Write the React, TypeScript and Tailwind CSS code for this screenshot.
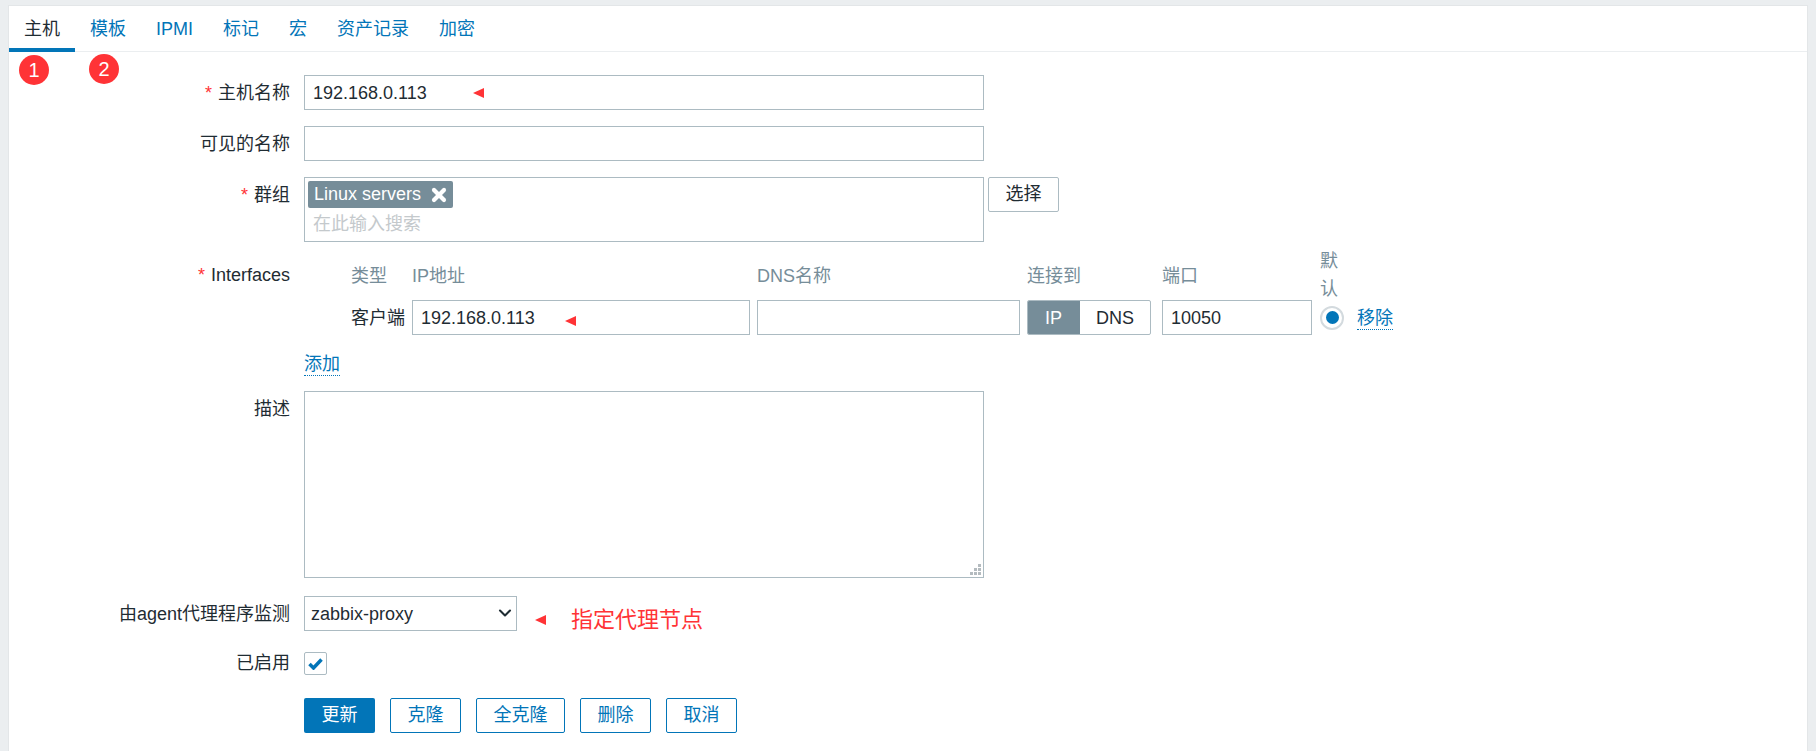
import { ChevronDown, X } from "lucide-react";

const tabs = ["主机", "模板", "IPMI", "标记", "宏", "资产记录", "加密"];
const buttons = ["克隆", "全克隆", "删除", "取消"];

function Arrow({ className }: { className: string }) {
  return (
    <svg width="11" height="10" viewBox="0 0 11 10" className={className}>
      <path d="M0 5 L11 0 L11 10 Z" fill="#ff3336" />
    </svg>
  );
}

function Badge({ n, className }: { n: string; className: string }) {
  return (
    <span
      className={
        "absolute flex h-[30px] w-[30px] items-center justify-center rounded-full bg-[#ff3336] text-[20px] text-white " +
        className
      }
    >
      {n}
    </span>
  );
}

function Row({
  label,
  required,
  className,
  labelClass = "h-[35px] leading-[37px]",
  children,
}: {
  label: string;
  required?: boolean;
  className?: string;
  labelClass?: string;
  children: React.ReactNode;
}) {
  return (
    <div className={"flex " + (className ?? "")}>
      <div className={"w-[295px] shrink-0 pr-[14px] text-right " + labelClass}>
        {required && <span className="mr-[6px] text-[#ff3336]">*</span>}
        {label}
      </div>
      {children}
    </div>
  );
}

const inputClass = "h-[35px] border border-[#acbbc2] bg-white px-[8px] leading-[35px]";
const headClass = "text-[#768d99] leading-[26px] pb-[14px]";

export default function App() {
  return (
    <div
      className="min-h-[751px] bg-[#ebeef0] px-[8px] pt-[5px] text-[18px] text-[#1f2c33]"
      style={{ fontFamily: '"Liberation Sans", "Noto Sans CJK SC", sans-serif' }}
    >
      <div className="relative h-[746px] border-x border-t border-[#e3e6e8] bg-white">
        <div className="flex h-[46px] border-b border-[#ebeef0]">
          {tabs.map((t, i) => (
            <div
              key={t}
              className={
                "px-[15px] pt-[11px] leading-[24px] " +
                (i === 0 ? "h-[46px] border-b-[4px] border-[#0275b8]" : "text-[#0275b8]")
              }
            >
              {t}
            </div>
          ))}
        </div>

        <Badge n="1" className="left-[10px] top-[49px]" />
        <Badge n="2" className="left-[80px] top-[48px]" />

        <div className="pt-[23px]">
          <Row label="主机名称" required>
            <div className={inputClass + " relative w-[680px]"}>
              192.168.0.113
              <Arrow className="absolute left-[168px] top-[12px]" />
            </div>
          </Row>

          <Row label="可见的名称" className="mt-[16px]">
            <div className={inputClass + " w-[680px]"} />
          </Row>

          <Row label="群组" required className="mt-[16px]">
            <div className="h-[65px] w-[680px] border border-[#acbbc2] px-[3px] pt-[3px]">
              <span className="flex h-[27px] w-[145px] items-center justify-between rounded-[2px] bg-[#768d99] pl-[6px] pr-[4px] text-white">
                Linux servers
                <X size={20} strokeWidth={5} />
              </span>
              <div className="pl-[5px] leading-[33px] text-[#c4c9cc]">在此输入搜索</div>
            </div>
            <div className="ml-[4px] flex h-[35px] w-[71px] items-center justify-center rounded-[2px] border border-[#acbbc2]">
              选择
            </div>
          </Row>

          <Row label="Interfaces" required className="mt-[5px]" labelClass="pt-[11px] leading-[35px]">
            <div>
              <div className="grid h-[53px] grid-cols-[108px_345px_270px_135px_158px_37px] items-end">
                <div className={headClass + " pl-[47px]"}>类型</div>
                <div className={headClass}>IP地址</div>
                <div className={headClass}>DNS名称</div>
                <div className={headClass}>连接到</div>
                <div className={headClass}>端口</div>
                <div className="w-[20px] self-start leading-[28px] text-[#768d99]">默认</div>
              </div>
              <div className="grid grid-cols-[108px_345px_270px_135px_158px_37px_auto] items-center">
                <div className="h-[35px] pl-[47px] leading-[37px]">客户端</div>
                <div className={inputClass + " relative w-[338px]"}>
                  192.168.0.113
                  <Arrow className="absolute left-[152px] top-[15px]" />
                </div>
                <div className={inputClass + " w-[263px]"} />
                <div className="flex h-[35px] w-[124px] overflow-hidden rounded-[2px] border border-[#acbbc2]">
                  <div className="-my-px -ml-px flex w-[53px] items-center justify-center bg-[#768d99] pt-[1px] text-white">IP</div>
                  <div className="flex flex-1 items-center justify-center pt-[1px]">DNS</div>
                </div>
                <div className={inputClass + " w-[150px]"}>10050</div>
                <div className="flex h-[24px] w-[24px] items-center justify-center rounded-full border-2 border-[#d3dade]">
                  <span className="h-[13px] w-[13px] rounded-full bg-[#0275b8]" />
                </div>
                <span className="mt-[2px] border-b border-dotted border-[#0275b8] leading-[22px] text-[#0275b8]">移除</span>
              </div>
            </div>
          </Row>

          <Row label="" className="mt-[18px]" labelClass="">
            <span className="border-b border-dotted border-[#0275b8] leading-[22px] text-[#0275b8]">添加</span>
          </Row>

          <Row label="描述" className="mt-[15px]">
            <div className="relative h-[187px] w-[680px] border border-[#acbbc2]">
              <svg width="11" height="11" viewBox="0 0 11 11" className="absolute bottom-[2px] right-[2px]">
                <g fill="#b4bbbf">
                  <rect x="8" y="0" width="3" height="3" />
                  <rect x="4" y="4" width="3" height="3" />
                  <rect x="8" y="4" width="3" height="3" />
                  <rect x="0" y="8" width="3" height="3" />
                  <rect x="4" y="8" width="3" height="3" />
                  <rect x="8" y="8" width="3" height="3" />
                </g>
              </svg>
            </div>
          </Row>

          <Row label="由agent代理程序监测" className="mt-[18px] h-[35px]">
            <div className={inputClass + " relative w-[213px] pl-[6px]"}>
              zabbix-proxy
              <ChevronDown size={20} strokeWidth={2.5} className="absolute right-[1px] top-[6px] text-[#1f2c33]" />
            </div>
            <Arrow className="ml-[18px] mt-[19px]" />
            <span className="ml-[25px] text-[22px] leading-[48px] text-[#ff3336]">指定代理节点</span>
          </Row>

          <Row label="已启用" className="mt-[21px]" labelClass="leading-[23px]">
            <div className="flex h-[23px] w-[23px] items-center justify-center rounded-[2px] border border-[#acbbc2]">
              <svg width="15" height="12" viewBox="0 0 15 12">
                <path d="M1.5 6 L5.5 10 L13.5 1.5" fill="none" stroke="#0275b8" strokeWidth="3.5" />
              </svg>
            </div>
          </Row>

          <Row label="" className="mt-[23px]" labelClass="">
            <div className="flex gap-[15px]">
              <div className="flex h-[35px] w-[71px] items-center justify-center rounded-[2px] bg-[#0275b8] text-white">更新</div>
              {buttons.map((b) => (
                <div
                  key={b}
                  className="flex h-[35px] items-center justify-center rounded-[2px] border border-[#0275b8] px-[16.5px] text-[#0275b8]"
                >
                  {b}
                </div>
              ))}
            </div>
          </Row>
        </div>
      </div>
    </div>
  );
}
